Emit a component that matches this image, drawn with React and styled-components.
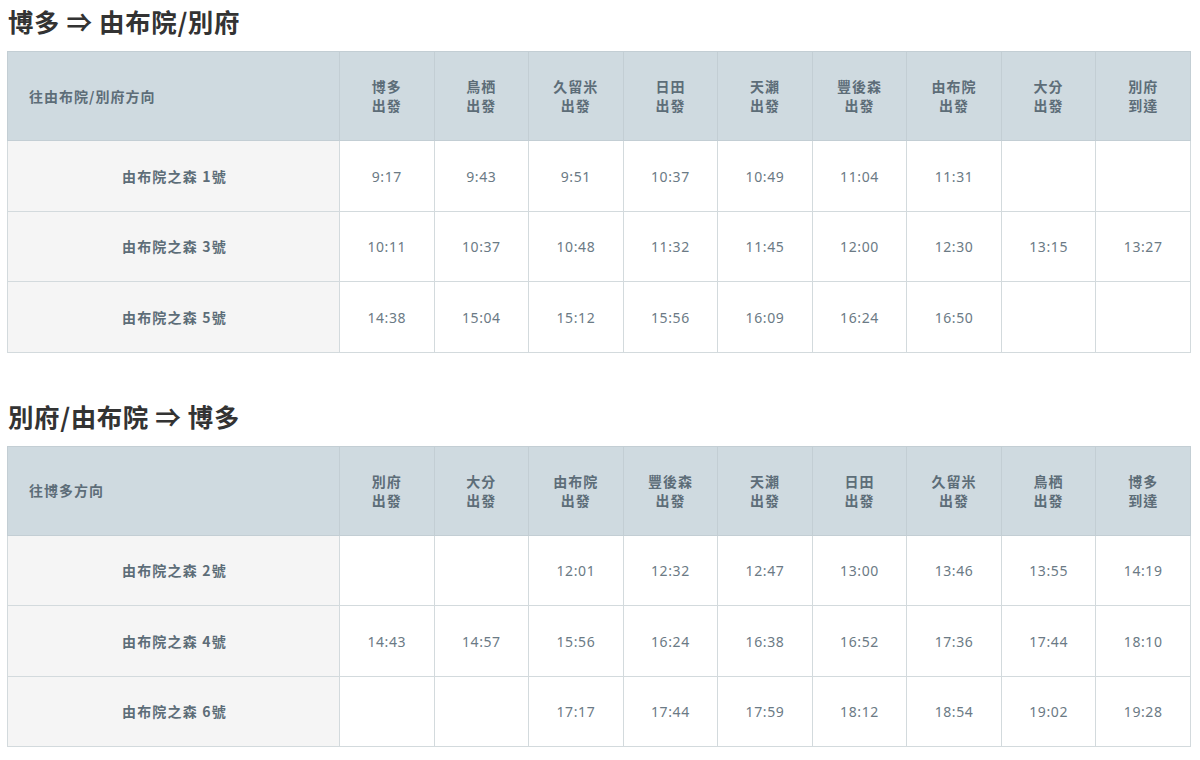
import React from "react";
import styled, { createGlobalStyle } from "styled-components";

const Global = createGlobalStyle`
  html, body { margin: 0; padding: 0; background: #fff; }
  body { font-family: "Noto Sans CJK TC", "Noto Sans", sans-serif; }
`;

const Page = styled.div`
  padding: 3px 9px 0 7px;
`;

const Title = styled.h2`
  margin: 0 0 13px 1px;
  font-size: 25.5px;
  line-height: 35px;
  font-weight: 700;
  color: #333;
  letter-spacing: 0.6px;
`;

const Section = styled.section`
  margin-bottom: ${(p) => p.$mb || 0}px;
`;

const Table = styled.table`
  width: 1184px;
  border-collapse: collapse;
  table-layout: fixed;
`;

const Th = styled.th`
  background: #cfdae0;
  border: 1px solid #c3ced4;
  height: 88px;
  padding: 0;
  color: #5d6d78;
  font-size: 14px;
  line-height: 19px;
  font-weight: 700;
  letter-spacing: 1px;
  text-align: ${(p) => (p.$left ? "left" : "center")};
  padding-left: ${(p) => (p.$left ? "21px" : "0")};
  width: ${(p) => (p.$left ? "310px" : "auto")};
`;

const Label = styled.td`
  background: #f5f5f5;
  border: 1px solid #d3dadd;
  height: 69.5px;
  padding: 0 0 0 2px;
  text-align: center;
  color: #5d6d78;
  font-size: 14px;
  font-weight: 700;
  letter-spacing: 1.2px;
`;

const Cell = styled.td`
  border: 1px solid #d3dadd;
  padding: 1px 0 0;
  text-align: center;
  color: #6b7a85;
  font-size: 14px;
  font-family: "Noto Sans", "Noto Sans CJK TC", sans-serif;
  letter-spacing: 0.6px;
`;

const Timetable = ({ title, direction, stations, rows, mb }) => (
  <Section $mb={mb}>
    <Title>{title}</Title>
    <Table>
      <thead>
        <tr>
          <Th $left>{direction}</Th>
          {stations.map(([a, b], i) => (
            <Th key={i}>
              {a}
              <br />
              {b}
            </Th>
          ))}
        </tr>
      </thead>
      <tbody>
        {rows.map(([name, times]) => (
          <tr key={name}>
            <Label>{name}</Label>
            {times.map((t, i) => (
              <Cell key={i}>{t}</Cell>
            ))}
          </tr>
        ))}
      </tbody>
    </Table>
  </Section>
);

const s1 = [
  ["博多", "出發"],
  ["鳥栖", "出發"],
  ["久留米", "出發"],
  ["日田", "出發"],
  ["天瀨", "出發"],
  ["豐後森", "出發"],
  ["由布院", "出發"],
  ["大分", "出發"],
  ["別府", "到達"],
];
const r1 = [
  ["由布院之森 1號", ["9:17", "9:43", "9:51", "10:37", "10:49", "11:04", "11:31", "", ""]],
  ["由布院之森 3號", ["10:11", "10:37", "10:48", "11:32", "11:45", "12:00", "12:30", "13:15", "13:27"]],
  ["由布院之森 5號", ["14:38", "15:04", "15:12", "15:56", "16:09", "16:24", "16:50", "", ""]],
];
const s2 = [
  ["別府", "出發"],
  ["大分", "出發"],
  ["由布院", "出發"],
  ["豐後森", "出發"],
  ["天瀨", "出發"],
  ["日田", "出發"],
  ["久留米", "出發"],
  ["鳥栖", "出發"],
  ["博多", "到達"],
];
const r2 = [
  ["由布院之森 2號", ["", "", "12:01", "12:32", "12:47", "13:00", "13:46", "13:55", "14:19"]],
  ["由布院之森 4號", ["14:43", "14:57", "15:56", "16:24", "16:38", "16:52", "17:36", "17:44", "18:10"]],
  ["由布院之森 6號", ["", "", "17:17", "17:44", "17:59", "18:12", "18:54", "19:02", "19:28"]],
];

export default function App() {
  return (
    <Page>
      <Global />
      <Timetable title="博多 ⇒ 由布院/別府" direction="往由布院/別府方向" stations={s1} rows={r1} mb={45} />
      <Timetable title="別府/由布院 ⇒ 博多" direction="往博多方向" stations={s2} rows={r2} />
    </Page>
  );
}
